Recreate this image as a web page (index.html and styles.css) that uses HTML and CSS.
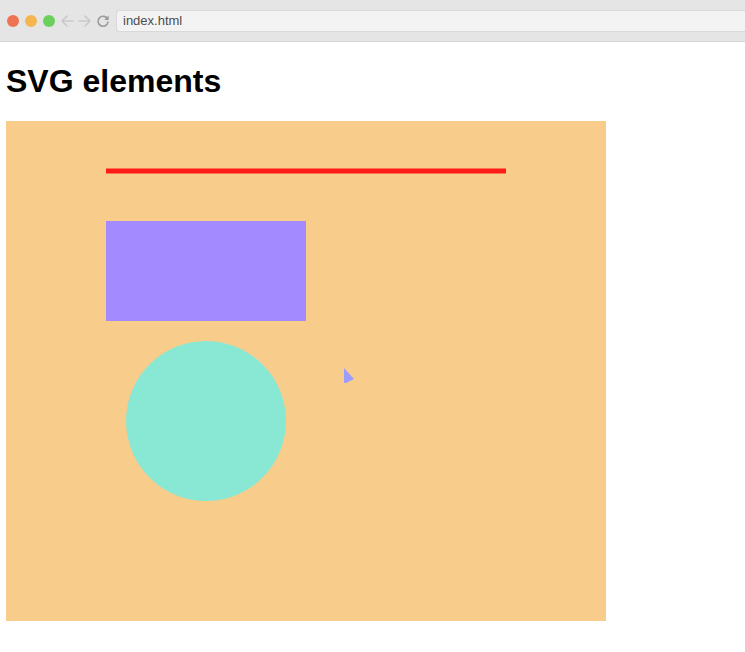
FILE: index.html
```html
<!DOCTYPE html>
<html>
<head>
<meta charset="utf-8">
<title>SVG elements</title>
<link rel="stylesheet" href="styles.css">
</head>
<body>
<div class="chrome">
  <div class="lights">
    <span class="light red"></span>
    <span class="light yellow"></span>
    <span class="light green"></span>
  </div>
  <div class="nav">
    <svg class="nav-icon" width="14" height="14" viewBox="0 0 14 14"><path d="M13 7H2M7 2L2 7l5 5" fill="none" stroke="#c9c9c9" stroke-width="1.5" stroke-linecap="round" stroke-linejoin="round"/></svg>
    <svg class="nav-icon" width="14" height="14" viewBox="0 0 14 14"><path d="M1 7h11M7 2l5 5-5 5" fill="none" stroke="#c9c9c9" stroke-width="1.5" stroke-linecap="round" stroke-linejoin="round"/></svg>
    <svg class="nav-icon reload" width="14" height="14" viewBox="0 0 14 14"><path d="M11.6 5.2A5 5 0 1 0 12 8" fill="none" stroke="#9b9b9b" stroke-width="1.6" stroke-linecap="round"/><path d="M12.6 1.6v4.4H8.2z" fill="#9b9b9b"/></svg>
  </div>
  <div class="address">index.html</div>
</div>
<div class="page">
  <h1 class="title">SVG elements</h1>
  <svg class="canvas" width="600" height="500" viewBox="0 0 600 500">
    <rect x="0" y="0" width="600" height="500" fill="#f8cc8a"/>
    <line x1="100" y1="50" x2="500" y2="50" stroke="#ff1a1a" stroke-width="5"/>
    <rect x="100" y="100" width="200" height="100" fill="#a38aff"/>
    <circle cx="200" cy="300" r="80" fill="#89e8d4"/>
    <polygon points="338,247 348,258 340,262 338,262" fill="#9d9dff"/>
  </svg>
</div>
</body>
</html>
```
FILE: styles.css
```css
html, body {
  margin: 0;
  padding: 0;
  background: #ffffff;
}

.chrome {
  height: 41px;
  background: #e5e5e5;
  border-bottom: 1px solid #d5d5d5;
  display: flex;
  align-items: center;
  padding-left: 7px;
  box-sizing: content-box;
}

.lights {
  display: flex;
  gap: 6px;
}

.light {
  width: 12px;
  height: 12px;
  border-radius: 50%;
  display: block;
}

.red { background: #ef7350; }
.yellow { background: #f5b650; }
.green { background: #6bd05c; }

.nav {
  display: flex;
  align-items: center;
  gap: 4px;
  margin-left: 5px;
}

.nav-icon {
  display: block;
}

.address {
  margin-left: 6px;
  flex: 1;
  height: 20px;
  background: #f3f3f3;
  border: 1px solid #d9d9d9;
  border-right: none;
  border-radius: 3px 0 0 3px;
  font-family: "Liberation Sans", Arial, sans-serif;
  font-size: 13px;
  color: #4d4d4d;
  line-height: 20px;
  padding-left: 6px;
}

.page {
  padding-left: 6px;
}

.title {
  font-family: "Liberation Sans", Arial, sans-serif;
  font-weight: bold;
  font-size: 32px;
  line-height: 37px;
  margin: 21px 0 21px 0;
  color: #000;
}

.canvas {
  display: block;
}
```
